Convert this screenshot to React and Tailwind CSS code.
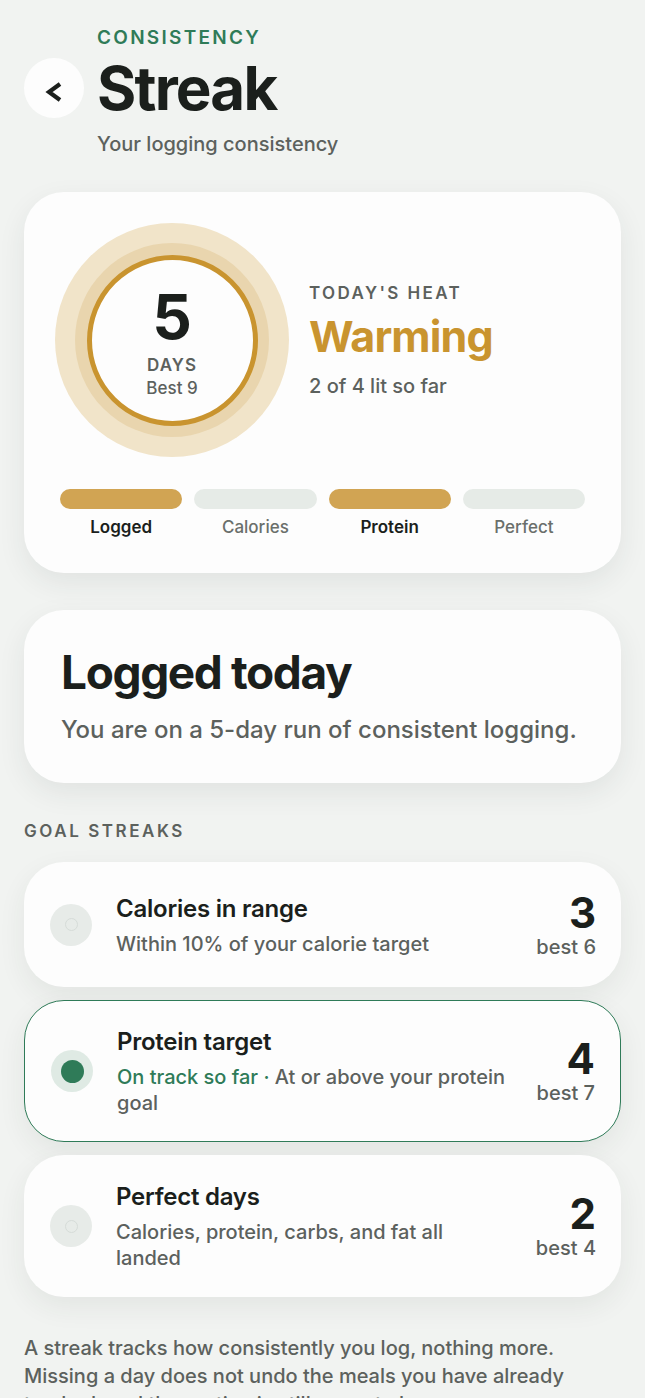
const BARS = [
  { label: "Logged", on: true },
  { label: "Calories", on: false },
  { label: "Protein", on: true },
  { label: "Perfect", on: false },
];

const GOALS = [
  { title: "Calories in range", desc: "Within 10% of your calorie target", count: 3, best: 6 },
  { title: "Protein target", status: "On track so far", desc: "At or above your protein goal", count: 4, best: 7, active: true },
  { title: "Perfect days", desc: "Calories, protein, carbs, and fat all landed", count: 2, best: 4 },
];

const GoalCard = ({ goal }) => (
  <div
    className={`flex min-h-[125px] items-center rounded-[40px] bg-[#fdfdfd] pl-[26px] pr-[25px] shadow-[0_10px_28px_rgba(40,50,45,0.07)] ${
      goal.active ? "border-[1.5px] border-[#2f7b58] py-[25px]" : "py-[26px]"
    }`}
  >
    {/* status dot */}
    {goal.active ? (
      <div className="flex h-[42px] w-[42px] shrink-0 items-center justify-center rounded-full bg-[#dfeae4]">
        <span className="block h-[23px] w-[23px] rounded-full bg-[#2f7b58]" />
      </div>
    ) : (
      <div className="flex h-[42px] w-[42px] shrink-0 items-center justify-center rounded-full bg-[#e7ebe8]">
        <span className="block h-[13px] w-[13px] rounded-full border border-[#d6dcd8]" />
      </div>
    )}

    <div className="ml-[24px] min-w-0 flex-1">
      <p className="text-[24px] font-semibold leading-[32px] tracking-[-0.01em] text-[#1b1f1c]">{goal.title}</p>
      <p className="mt-[6px] text-[20px] font-medium leading-[26px] text-[#5c615d]">
        {goal.status && <span className="text-[#2f7b58]">{goal.status} · </span>}
        {goal.desc}
      </p>
    </div>

    <div className="ml-[26px] flex shrink-0 flex-col items-end">
      <span className="text-[42px] font-bold leading-[44px] text-[#1b1f1c]">{goal.count}</span>
      <span className="text-[20px] font-medium leading-[24px] text-[#5c615d]">best {goal.best}</span>
    </div>
  </div>
);

export default function App() {
  return (
    <div className="min-h-[1398px] bg-[#f1f3f1] px-6 pt-[26px] pb-10 font-['Inter',sans-serif] text-[#1b1f1c]">
      {/* Header */}
      <div className="grid grid-cols-[60px_1fr] gap-x-[13px]">
        <p className="col-start-2 text-[19px] font-semibold uppercase leading-[24px] tracking-[0.12em] text-[#2f7b58]">
          Consistency
        </p>
        <button className="col-start-1 row-start-2 mt-[8px] flex h-[60px] w-[60px] items-center justify-center rounded-full bg-[#fdfdfd]">
          <svg viewBox="0 0 20 22" className="mt-[8px] h-[22px] w-[20px]" fill="none">
            <polyline points="16,3 5,11 16,19" stroke="#1b1f1c" strokeWidth="4.2" strokeLinejoin="miter" />
          </svg>
        </button>
        <h1 className="col-start-2 row-start-2 mt-[4px] text-[60px] font-bold leading-[68px] tracking-[-0.03em]">
          Streak
        </h1>
        <p className="col-start-2 row-start-3 mt-[10px] text-[20px] font-medium leading-[24px] text-[#5c615d]">
          Your logging consistency
        </p>
      </div>

      {/* Heat card */}
      <div className="mt-[36px] rounded-[40px] bg-[#fdfdfd] px-[31px] pt-[31px] pb-[35px] shadow-[0_10px_28px_rgba(40,50,45,0.08)]">
        <div className="flex items-center gap-[20px]">
          <div className="flex h-[234px] w-[234px] shrink-0 items-center justify-center rounded-full bg-[#f1e4c9]">
            <div className="flex h-[194px] w-[194px] items-center justify-center rounded-full bg-[#e9d5ae]">
              <div className="flex h-[171px] w-[171px] flex-col items-center justify-center rounded-full border-[5px] border-[#c9942f] bg-[#fdfdfd]">
                <span className="mt-[6px] text-[62px] font-bold leading-[60px] text-[#1b1f1c]">5</span>
                <span className="mt-[8px] text-[17px] font-semibold uppercase leading-[20px] tracking-[0.06em] text-[#5c615d]">
                  Days
                </span>
                <span className="mt-[2px] text-[17px] font-medium leading-[22px] text-[#5c615d]">Best 9</span>
              </div>
            </div>
          </div>

          <div>
            <p className="text-[17px] font-semibold uppercase leading-[22px] tracking-[0.14em] text-[#5c615d]">
              Today's heat
            </p>
            <p className="mt-[6px] text-[43px] font-bold leading-[52px] tracking-[-0.02em] text-[#c9942f]">Warming</p>
            <p className="mt-[11px] text-[20px] font-medium leading-[26px] text-[#5c615d]">2 of 4 lit so far</p>
          </div>
        </div>

        <div className="mt-[32px] grid grid-cols-4 gap-[12px] px-[5px]">
          {BARS.map((b) => (
            <div key={b.label} className="flex flex-col items-center">
              <span className={`block h-[20px] w-full rounded-full ${b.on ? "bg-[#d1a453]" : "bg-[#e6ebe7]"}`} />
              <span
                className={`mt-[7px] text-[17px] leading-[22px] ${
                  b.on ? "font-semibold text-[#1b1f1c]" : "font-medium text-[#6a6f6b]"
                }`}
              >
                {b.label}
              </span>
            </div>
          ))}
        </div>
      </div>

      {/* Logged today */}
      <div className="mt-[37px] rounded-[40px] bg-[#fdfdfd] px-[37px] pt-[35px] pb-[38px] shadow-[0_10px_28px_rgba(40,50,45,0.08)]">
        <h2 className="text-[46px] font-bold leading-[54px] tracking-[-0.03em] text-[#1b1f1c]">Logged today</h2>
        <p className="mt-[16px] text-[24px] font-medium leading-[30px] text-[#5c615d]">
          You are on a 5-day run of consistent logging.
        </p>
      </div>

      {/* Goal streaks */}
      <p className="mt-[37px] text-[17px] font-semibold uppercase leading-[22px] tracking-[0.15em] text-[#5c615d]">
        Goal streaks
      </p>
      <div className="mt-[20px] flex flex-col gap-[13px]">
        {GOALS.map((g) => (
          <GoalCard key={g.title} goal={g} />
        ))}
      </div>

      <p className="mt-[37px] text-[20px] font-medium leading-[28px] text-[#5c615d]">
        A streak tracks how consistently you log, nothing more. Missing a day does not undo the meals you have already
        tracked, and the routine is still yours to keep.
      </p>
    </div>
  );
}
